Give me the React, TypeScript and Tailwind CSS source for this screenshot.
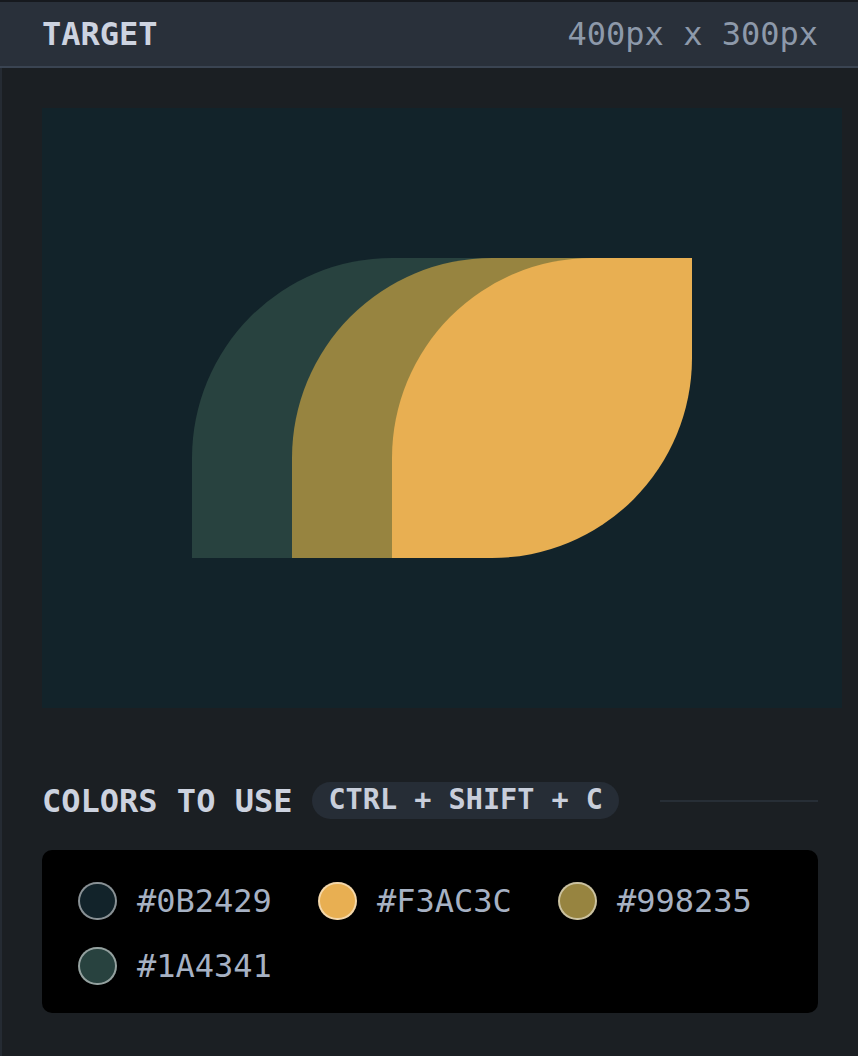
import React from "react";

const mono = { fontFamily: '"DejaVu Sans Mono", "Liberation Mono", monospace' };

const colors = [
  { hex: "#0B2429", fill: "bg-[#12232a]" },
  { hex: "#F3AC3C", fill: "bg-[#e8af52]" },
  { hex: "#998235", fill: "bg-[#978440]" },
  { hex: "#1A4341", fill: "bg-[#28423f]" },
];

export default function App() {
  return (
    <div className="w-[858px] h-[1056px] bg-[#1b1f23] flex flex-col overflow-hidden" style={mono}>
      <div className="h-[2px] bg-[#16191e]" />
      <header className="h-[66px] shrink-0 bg-[#29303a] border-b-2 border-[#3a4452] pl-[42px] pr-[40px] flex items-center justify-between">
        <span className="text-[32px] font-bold text-[#cdd3e0] leading-none">TARGET</span>
        <span className="text-[32px] text-[#8d99aa] leading-none">400px x 300px</span>
      </header>
      <main className="flex-1 border-l-2 border-[#252b33] pl-[40px] pr-[40px] pt-[40px] flex flex-col">
        <div className="relative w-[800px] h-[600px] shrink-0 bg-[#12232a] overflow-hidden">
          <div className="absolute left-[150px] top-[150px] w-[300px] h-[300px] bg-[#28423f] rounded-tl-[200px] rounded-br-[200px]" />
          <div className="absolute left-[250px] top-[150px] w-[300px] h-[300px] bg-[#978440] rounded-tl-[200px] rounded-br-[200px]" />
          <div className="absolute left-[350px] top-[150px] w-[300px] h-[300px] bg-[#e8af52] rounded-tl-[200px] rounded-br-[200px]" />
        </div>
        <div className="mt-[74px] h-[37px] flex items-center">
          <span className="text-[32px] font-bold text-[#ccd2df] leading-none">COLORS TO USE</span>
          <span className="ml-[20px] h-[37px] px-[16px] rounded-full bg-[#262d36] flex items-center text-[28.5px] font-bold text-[#c8cedb] leading-none">
            CTRL + SHIFT + C
          </span>
          <div className="ml-[41px] flex-1 h-[2px] bg-[#272e36]" />
        </div>
        <div className="mt-[31px] bg-black rounded-[10px] pl-[36px] pr-[36px] pt-[32px] pb-[28px] grid grid-cols-[240px_240px_240px] gap-y-[27px]">
          {colors.map((c) => (
            <div key={c.hex} className="flex items-center h-[38px]">
              <div className={`w-[39px] h-[38px] rounded-full border-2 border-white/50 ${c.fill}`} />
              <span className="ml-[20px] text-[32px] text-[#a6b1c3] leading-none">{c.hex}</span>
            </div>
          ))}
        </div>
      </main>
    </div>
  );
}
